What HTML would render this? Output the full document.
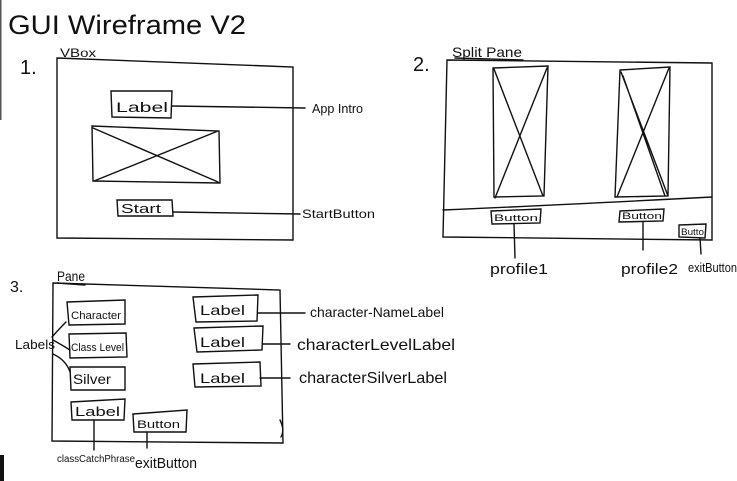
<!DOCTYPE html>
<html><head><meta charset="utf-8"><style>
html,body{margin:0;padding:0;background:#fff;}
svg{display:block}
text{font-family:"Liberation Sans",sans-serif;fill:#111;}
</style></head><body>
<svg width="737" height="481" viewBox="0 0 737 481" xmlns="http://www.w3.org/2000/svg">
<rect x="0" y="0" width="737" height="481" fill="#fff"/>
<rect x="0" y="455" width="4" height="26" fill="#111"/>
<rect x="0" y="0" width="1.5" height="120" fill="#555"/>
<g stroke="#111" stroke-width="1.4" fill="none" stroke-linecap="round">
<path d="M57 58 L293 67 L293 240 L57 238 Z"/>
<path d="M111 91 L172 91 L171 118 L112 117 Z"/>
<path d="M172 106 L305 108"/>
<path d="M92 126 L219 131 L220 183 L93 181 Z M93 128 L218 182 M218 131 L94 181"/>
<path d="M117 200 L172 200 L173 216 L118 216 Z"/>
<path d="M173 212 L300 214"/>
<path d="M447 60 L712 63 L712 240 L443 237 Z"/>
<path d="M443 210 Q560 205 712 197"/>
<path d="M493 68 L548 66 L544 196 L494 197 Z M494 69 L543 196 M547 68 L495 198"/>
<path d="M620 70 L670 67 L668 196 L615 197 Z M621 72 L668 196 M669 68 L617 197 M623 76 L665 196"/>
<path d="M491 211 L541 209 L540 223 L492 224 Z M514 224 L515 258"/>
<path d="M620 211 L664 209 L663 221 L619 222 Z M643 222 L643 250"/>
<path d="M679 225 L706 224 L705 238 L679 237 Z M700 238 L701 254"/>
<path d="M455 58 L523 60"/>
<path d="M53 283 L280 290 L283 443 L52 441 Z"/>
<path d="M280 420 Q285 430 281 437"/>
<path d="M57 283 L85 285"/>
<path d="M67 302 L125 300 L125 324 L69 325 Z"/>
<path d="M69 334 L126 333 L127 357 L70 358 Z"/>
<path d="M70 367 L125 367 L125 390 L71 390 Z"/>
<path d="M71 402 L125 399 L124 420 L72 420 Z"/>
<path d="M133 414 L187 410 L186 432 L134 432 Z"/>
<path d="M193 297 L258 295 L257 321 L196 322 Z"/>
<path d="M194 328 L263 326 L262 350 L197 352 Z"/>
<path d="M193 364 L260 362 L261 386 L195 387 Z"/>
<path d="M258 313 L305 313 M263 344 L290 344 M260 378 L290 378"/>
<path d="M52 337 Q60 328 66 322 M53 340 Q62 345 70 350 M53 354 Q66 360 70 372"/>
<path d="M94 420 L94 450 M147 432 L147 448"/>
</g>
<text x="8" y="34" font-size="27" textLength="238" lengthAdjust="spacingAndGlyphs">GUI Wireframe V2</text>
<text x="60" y="57" font-size="12" textLength="36" lengthAdjust="spacingAndGlyphs">VBox</text>
<text x="20" y="74" font-size="20">1.</text>
<text x="116" y="112" font-size="14" textLength="52" lengthAdjust="spacingAndGlyphs">Label</text>
<text x="121" y="213" font-size="13" textLength="40" lengthAdjust="spacingAndGlyphs">Start</text>
<text x="312" y="113" font-size="13" textLength="51" lengthAdjust="spacingAndGlyphs">App Intro</text>
<text x="302" y="218" font-size="12" textLength="73" lengthAdjust="spacingAndGlyphs">StartButton</text>
<text x="413" y="71" font-size="20">2.</text>
<text x="452" y="57" font-size="14" textLength="70" lengthAdjust="spacingAndGlyphs">Split Pane</text>
<text x="494" y="221" font-size="9" textLength="44" lengthAdjust="spacingAndGlyphs">Button</text>
<text x="622" y="219" font-size="9" textLength="40" lengthAdjust="spacingAndGlyphs">Button</text>
<text x="681" y="235" font-size="9" textLength="23" lengthAdjust="spacingAndGlyphs">Butto</text>
<text x="490" y="274" font-size="15" textLength="58" lengthAdjust="spacingAndGlyphs">profile1</text>
<text x="621" y="274" font-size="15" textLength="57" lengthAdjust="spacingAndGlyphs">profile2</text>
<text x="688" y="272" font-size="13" textLength="49" lengthAdjust="spacingAndGlyphs">exitButton</text>
<text x="10" y="292" font-size="16">3.</text>
<text x="57" y="281" font-size="14" textLength="28" lengthAdjust="spacingAndGlyphs">Pane</text>
<text x="71" y="319" font-size="11" textLength="50" lengthAdjust="spacingAndGlyphs">Character</text>
<text x="71" y="351" font-size="11" textLength="53" lengthAdjust="spacingAndGlyphs">Class Level</text>
<text x="73" y="384" font-size="14" textLength="38" lengthAdjust="spacingAndGlyphs">Silver</text>
<text x="75" y="416" font-size="13" textLength="45" lengthAdjust="spacingAndGlyphs">Label</text>
<text x="137" y="428" font-size="11" textLength="43" lengthAdjust="spacingAndGlyphs">Button</text>
<text x="200" y="315" font-size="14" textLength="45" lengthAdjust="spacingAndGlyphs">Label</text>
<text x="200" y="347" font-size="14" textLength="45" lengthAdjust="spacingAndGlyphs">Label</text>
<text x="200" y="383" font-size="14" textLength="45" lengthAdjust="spacingAndGlyphs">Label</text>
<text x="15" y="349" font-size="13" textLength="40" lengthAdjust="spacingAndGlyphs">Labels</text>
<text x="310" y="317" font-size="14" textLength="134" lengthAdjust="spacingAndGlyphs">character-NameLabel</text>
<text x="297" y="350" font-size="16" textLength="158" lengthAdjust="spacingAndGlyphs">characterLevelLabel</text>
<text x="299" y="383" font-size="16" textLength="148" lengthAdjust="spacingAndGlyphs">characterSilverLabel</text>
<text x="57" y="462" font-size="10" textLength="78" lengthAdjust="spacingAndGlyphs">classCatchPhrase</text>
<text x="135" y="468" font-size="15" textLength="62" lengthAdjust="spacingAndGlyphs">exitButton</text>
</svg>
</body></html>
